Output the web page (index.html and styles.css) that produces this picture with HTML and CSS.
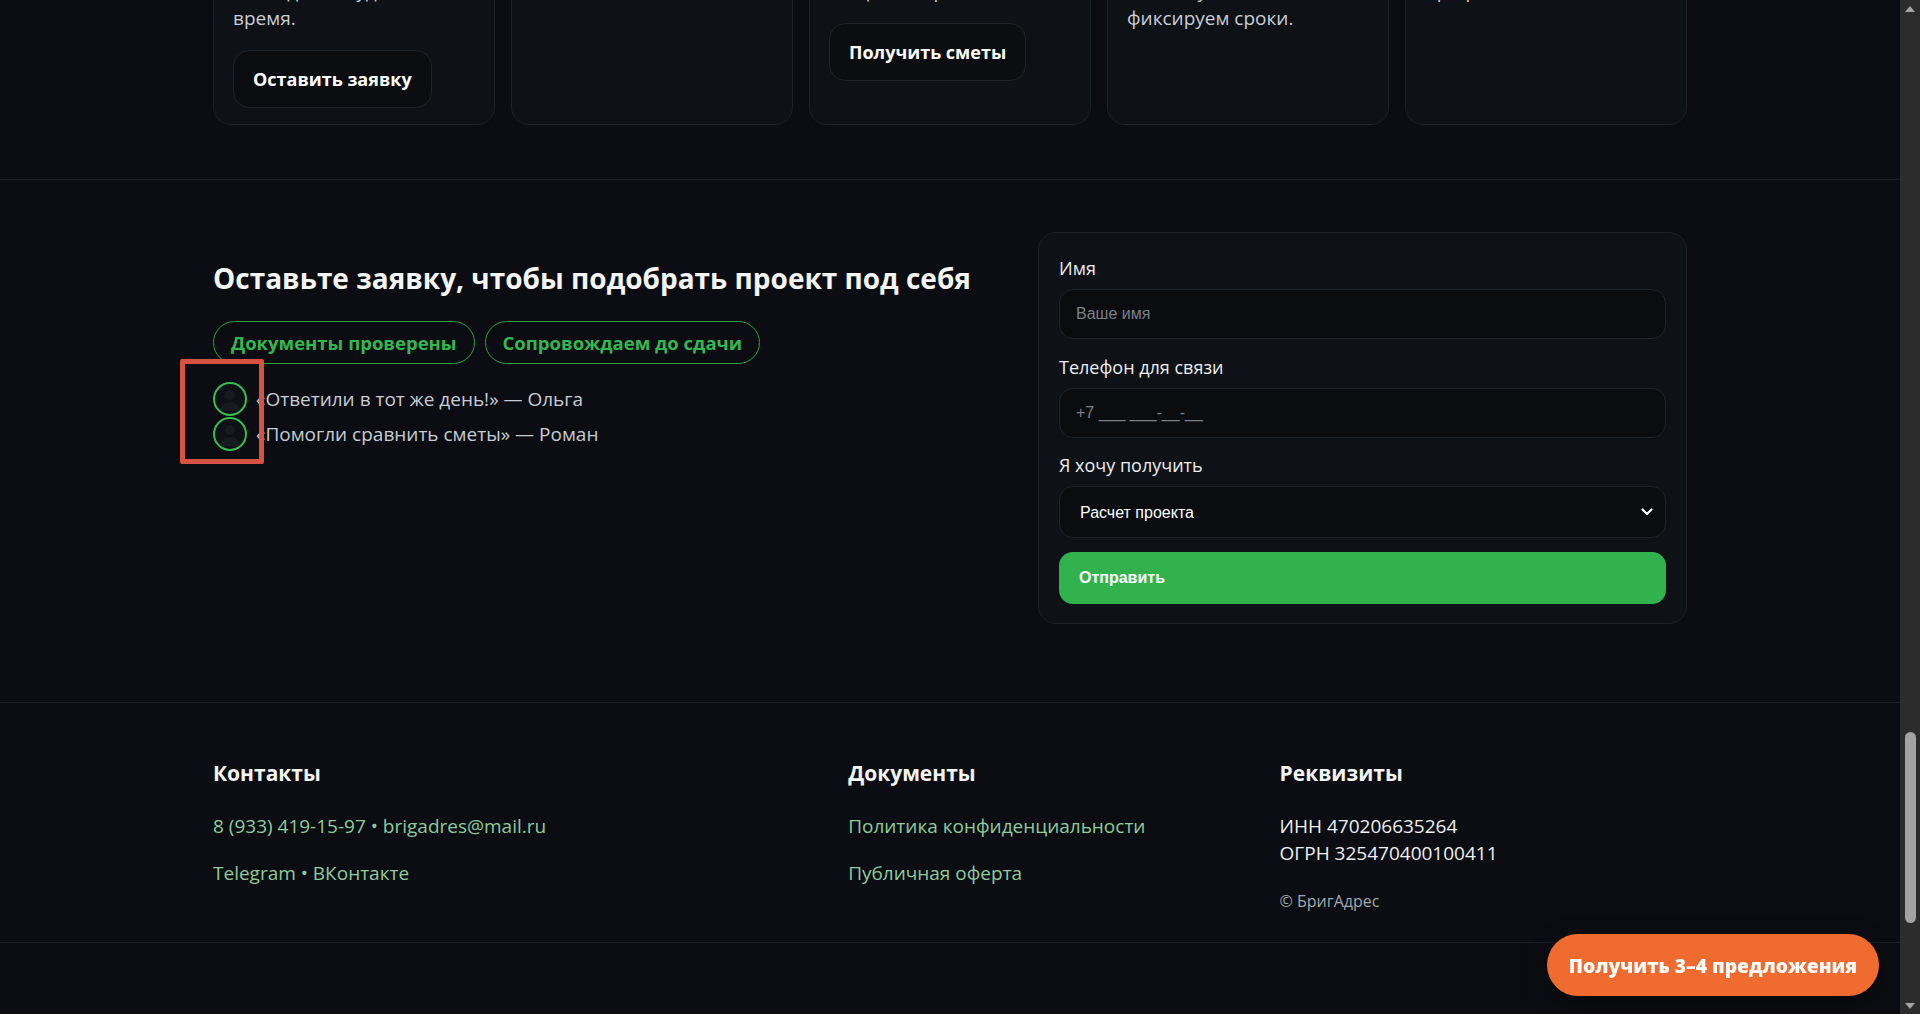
FILE: index.html
```html
<!DOCTYPE html>
<html lang="ru">
<head>
<meta charset="utf-8">
<title>БригАдрес</title>
<link rel="stylesheet" href="styles.css">
</head>
<body>
<div class="viewport">
  <div class="page">
    <section class="steps">
      <div class="container steps-grid">
        <article class="step">
          <h3>Заявка</h3>
          <p>Расскажите о задаче,<br>мы уточним детали<br>и подберём бригады,<br>свободные в удобное<br>время.</p>
          <a class="btn-ghost" href="#">Оставить заявку</a>
        </article>
        <article class="step">
          <h3>Проверка</h3>
          <p>Проверяем<br>документы, отзывы<br>и портфолио бригад.</p>
        </article>
        <article class="step">
          <h3>Сметы</h3>
          <p>Собираем 3–4 сметы<br>от разных бригад<br>и сравниваем их<br>по цене и срокам.</p>
          <a class="btn-ghost" href="#">Получить сметы</a>
        </article>
        <article class="step">
          <h3>Договор</h3>
          <p>Помогаем<br>заключить договор,<br>согласовать этапы<br>и оплату, а также<br>фиксируем сроки.</p>
        </article>
        <article class="step">
          <h3>Контроль</h3>
          <p>Сопровождаем<br>ремонт до сдачи<br>объекта, помогаем<br>при разногласиях.</p>
        </article>
      </div>
    </section>

    <section class="lead">
      <div class="container lead-grid">
        <div class="lead-info">
          <h2 class="lead-title">Оставьте заявку, чтобы подобрать проект под себя</h2>
          <div class="chips">
            <span class="chip">Документы проверены</span>
            <span class="chip">Сопровождаем до сдачи</span>
          </div>
          <div class="reviews">
            <div class="review">
              <span class="avatar"><svg viewBox="0 0 30 30" width="30" height="30"><circle cx="15" cy="11" r="5" fill="#171b21"/><path d="M5 27c1-6 5-9 10-9s9 3 10 9z" fill="#171b21"/></svg></span>
              <span class="review-text">«Ответили в тот же день!» — Ольга</span>
            </div>
            <div class="review">
              <span class="avatar"><svg viewBox="0 0 30 30" width="30" height="30"><circle cx="15" cy="11" r="5" fill="#171b21"/><path d="M5 27c1-6 5-9 10-9s9 3 10 9z" fill="#171b21"/></svg></span>
              <span class="review-text">«Помогли сравнить сметы» — Роман</span>
            </div>
            <div class="highlight"></div>
          </div>
        </div>

        <form class="lead-form">
          <label class="field-label" for="name">Имя</label>
          <input class="field" id="name" type="text" placeholder="Ваше имя">
          <label class="field-label" for="phone">Телефон для связи</label>
          <input class="field" id="phone" type="tel" placeholder="+7 ___ ___-__-__">
          <label class="field-label" for="want">Я хочу получить</label>
          <div class="select-wrap">
            <select class="field select" id="want">
              <option>Расчет проекта</option>
              <option>Подбор бригады</option>
            </select>
            <svg class="select-arrow" viewBox="0 0 12 8" width="12" height="8"><path d="M1.5 1.5 6 6l4.5-4.5" fill="none" stroke="#fff" stroke-width="2.2" stroke-linecap="round" stroke-linejoin="round"/></svg>
          </div>
          <button class="submit" type="button">Отправить</button>
        </form>
      </div>
    </section>

    <footer class="footer">
      <div class="container footer-grid">
        <div class="footer-col">
          <h4>Контакты</h4>
          <p><a href="#">8 (933) 419-15-97</a> • <a href="#">brigadres@mail.ru</a></p>
          <p><a href="#">Telegram</a> • <a href="#">ВКонтакте</a></p>
        </div>
        <div class="footer-col">
          <h4>Документы</h4>
          <p><a href="#">Политика конфиденциальности</a></p>
          <p><a href="#">Публичная оферта</a></p>
        </div>
        <div class="footer-col">
          <h4>Реквизиты</h4>
          <p class="plain">ИНН 470206635264<br>ОГРН 325470400100411</p>
          <p class="copy">© БригАдрес</p>
        </div>
      </div>
    </footer>
    <div class="footer-bottom"></div>
  </div>

  <div class="scrollbar" aria-hidden="true">
    <div class="sb-arrow"><svg viewBox="0 0 10 6" width="10" height="6"><path d="M0 6 5 0l5 6z" fill="#a3a3a3"/></svg></div>
    <div class="sb-track"><div class="sb-thumb"></div></div>
    <div class="sb-arrow"><svg viewBox="0 0 10 6" width="10" height="6"><path d="M0 0h10L5 6z" fill="#a3a3a3"/></svg></div>
  </div>
</div>

<a class="cta" href="#">Получить 3–4 предложения</a>
</body>
</html>
```

FILE: styles.css
```css
* { box-sizing: border-box; }

html, body {
  margin: 0;
  height: 100%;
}

body {
  background: #0b0d12;
  color: #e6e8eb;
  font-family: "Open Sans", "Noto Sans", sans-serif;
  overflow: hidden;
}

a { color: inherit; text-decoration: none; }

.viewport {
  display: flex;
  height: 1014px;
  overflow: hidden;
}

.page {
  flex: 1;
  min-width: 0;
  overflow: hidden;
}

.container {
  width: 1474px;
  margin: 0 auto;
}

/* ---------- steps ---------- */
.steps {
  margin-top: -160px;
  padding-bottom: 54px;
  border-bottom: 1px solid #1b1f26;
}

.steps-grid {
  display: grid;
  grid-template-columns: repeat(5, 1fr);
  gap: 16px;
}

.step {
  background: #0e1116;
  border: 1px solid #1d2128;
  border-radius: 18px;
  padding: 20px 19px 16px;
}

.step h3 {
  margin: 0 0 10px;
  font-size: 20px;
  line-height: 26px;
  font-weight: 700;
  color: #f2f4f6;
}

.step p {
  margin: 0;
  font-size: 19px;
  line-height: 27px;
  color: #c9ced6;
}

.btn-ghost {
  display: inline-block;
  margin-top: 18px;
  padding: 17px 19px;
  font-size: 18px;
  line-height: 22px;
  font-weight: 700;
  color: #fff;
  background: #0b0d11;
  border: 1px solid #20242b;
  border-radius: 16px;
}

/* ---------- lead ---------- */
.lead {
  padding: 52px 0 78px;
  border-bottom: 1px solid #1b1f26;
}

.lead-grid {
  display: grid;
  grid-template-columns: 1fr 649px;
  gap: 40px;
  align-items: start;
}

.lead-title {
  margin: 28px 0 0;
  font-size: 28px;
  line-height: 36px;
  font-weight: 700;
  color: #f3f5f7;
}

.chips {
  display: flex;
  gap: 10px;
  margin-top: 25px;
}

.chip {
  display: inline-flex;
  align-items: center;
  height: 43px;
  padding: 0 17px;
  border: 1px solid #2f9e45;
  border-radius: 22px;
  color: #34b651;
  font-size: 18.5px;
  font-weight: 700;
}

.reviews {
  position: relative;
  margin-top: 18px;
  display: flex;
  flex-direction: column;
  gap: 1px;
}

.review {
  display: flex;
  align-items: center;
  gap: 9px;
  height: 34px;
}

.avatar {
  width: 34px;
  height: 34px;
  flex: none;
  border-radius: 50%;
  border: 2px solid #38bb52;
  background: #0e1116;
  display: flex;
  align-items: center;
  justify-content: center;
  overflow: hidden;
}

.review-text {
  font-size: 19px;
  color: #c7ccd4;
  white-space: nowrap;
}

.highlight {
  position: absolute;
  left: -33px;
  top: -23px;
  width: 84px;
  height: 105px;
  border: 5px solid #d65343;
  border-radius: 2px;
}

.lead-form {
  background: #0e1116;
  border: 1px solid #1d2128;
  border-radius: 18px;
  padding: 21px 20px 19px;
  display: flex;
  flex-direction: column;
}

.field-label {
  font-size: 18px;
  line-height: 28px;
  margin-bottom: 7px;
  color: #eceef1;
}

.field {
  width: 100%;
  height: 50px;
  margin: 0 0 13.5px;
  padding: 0 16px;
  background: #0a0c10;
  border: 1px solid #1f232a;
  border-radius: 14px;
  color: #fff;
  font-family: "Liberation Sans", Arial, sans-serif;
  font-size: 16px;
  outline: none;
}

.field::placeholder { color: #7b8088; }

.select-wrap {
  position: relative;
}

.select {
  height: 52px;
  margin: 0;
  padding: 0 20px;
  appearance: none;
  -webkit-appearance: none;
}

.select-arrow {
  position: absolute;
  right: 13px;
  top: 22px;
}

.submit {
  margin-top: 13.5px;
  height: 52px;
  border: 0;
  border-radius: 14px;
  background: #31b24d;
  color: #fff;
  text-align: left;
  padding: 0 20px;
  font-family: "Liberation Sans", Arial, sans-serif;
  font-size: 16px;
  font-weight: 700;
}

/* ---------- footer ---------- */
.footer {
  padding: 56px 0 30px;
  border-bottom: 1px solid #1b1f26;
}

.footer-grid {
  display: grid;
  grid-template-columns: 1.5fr 1fr 1fr;
  gap: 24px;
}

.footer-col h4 {
  margin: 0 0 26px;
  font-size: 21px;
  line-height: 28px;
  font-weight: 700;
  color: #f3f5f7;
}

.footer-col p {
  margin: 0 0 20px;
  font-size: 19px;
  line-height: 27px;
  color: #8fcb9c;
}

.footer-col p.plain { color: #eef0f2; margin-bottom: 23px; }

.footer-col p.copy {
  font-size: 16px;
  line-height: 22px;
  color: #a1a7ae;
  margin: 0;
}

.footer-bottom {
  height: 80px;
}

/* ---------- fake scrollbar ---------- */
.scrollbar {
  width: 20px;
  flex: none;
  background: #2c2c2c;
  display: flex;
  flex-direction: column;
}

.sb-arrow {
  height: 17px;
  display: flex;
  align-items: center;
  justify-content: center;
}

.sb-track {
  flex: 1;
  padding-top: 715px;
  display: flex;
  justify-content: center;
}

.sb-thumb {
  width: 11px;
  height: 191px;
  border-radius: 6px;
  background: #a3a3a3;
}

/* ---------- floating CTA ---------- */
.cta {
  position: fixed;
  right: 41px;
  bottom: 18px;
  height: 62px;
  padding: 0 22px;
  display: flex;
  align-items: center;
  border-radius: 31px;
  background: #f06b2f;
  color: #fff;
  font-size: 19.3px;
  font-weight: 800;
  box-shadow: 0 8px 24px rgba(0, 0, 0, 0.35);
}
```
